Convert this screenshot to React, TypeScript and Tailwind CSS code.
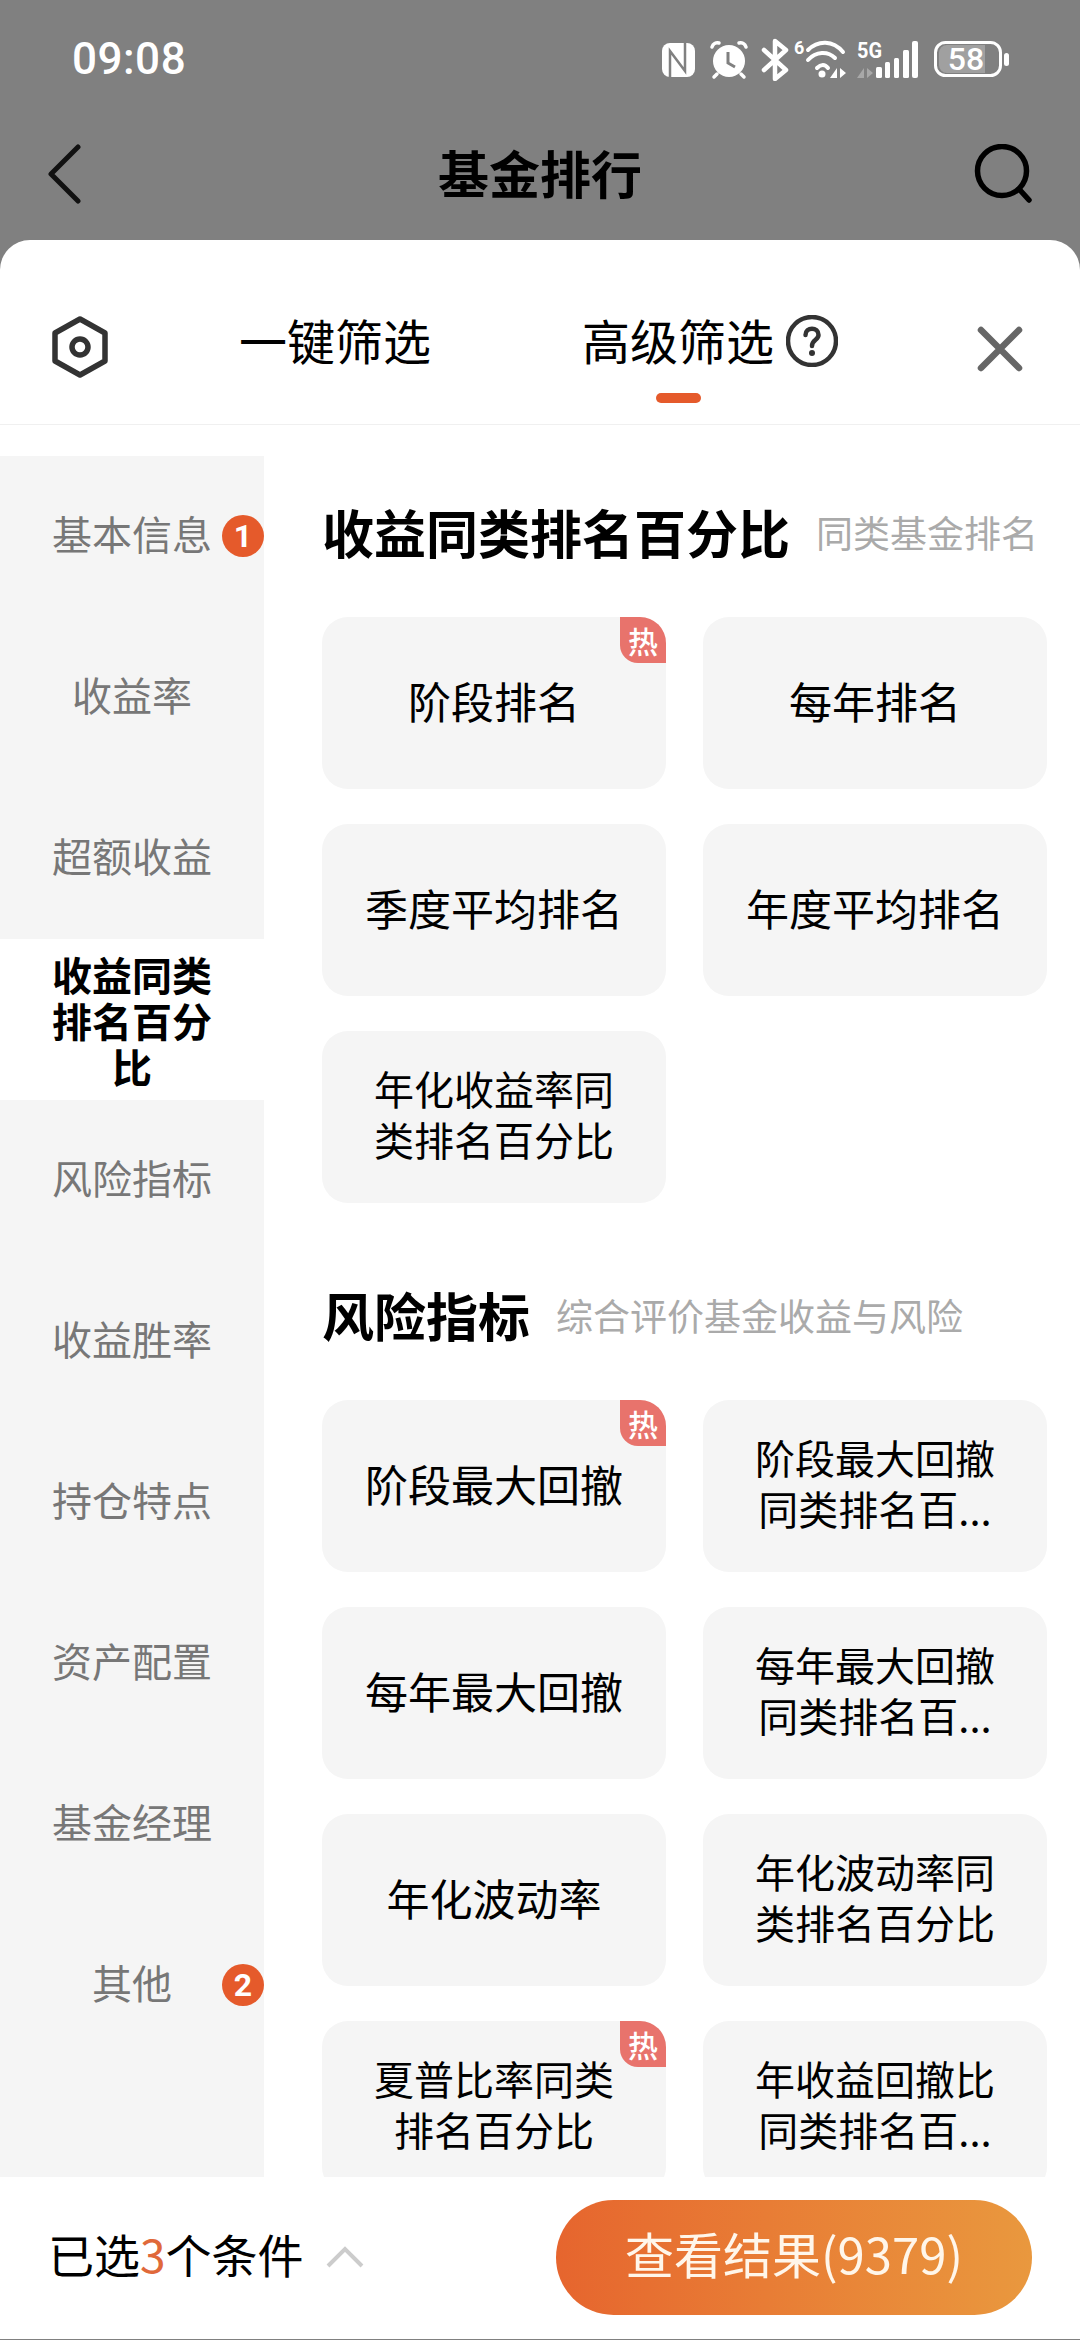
const CJK = "font-['Noto_Sans_CJK_SC','Noto_Sans',sans-serif]";

type SideItem = { label: string; badge?: number; active?: boolean };

const SIDE_ITEMS: SideItem[] = [
  { label: "基本信息", badge: 1 },
  { label: "收益率" },
  { label: "超额收益" },
  { label: "收益同类排名百分比", active: true },
  { label: "风险指标" },
  { label: "收益胜率" },
  { label: "持仓特点" },
  { label: "资产配置" },
  { label: "基金经理" },
  { label: "其他", badge: 2 },
];

type Option = { lines: string[]; hot?: boolean };

const RANK_OPTIONS: Option[] = [
  { lines: ["阶段排名"], hot: true },
  { lines: ["每年排名"] },
  { lines: ["季度平均排名"] },
  { lines: ["年度平均排名"] },
  { lines: ["年化收益率同", "类排名百分比"] },
];

const RISK_OPTIONS: Option[] = [
  { lines: ["阶段最大回撤"], hot: true },
  { lines: ["阶段最大回撤", "同类排名百..."] },
  { lines: ["每年最大回撤"] },
  { lines: ["每年最大回撤", "同类排名百..."] },
  { lines: ["年化波动率"] },
  { lines: ["年化波动率同", "类排名百分比"] },
  { lines: ["夏普比率同类", "排名百分比"], hot: true },
  { lines: ["年收益回撤比", "同类排名百..."] },
];

function StatusIcons() {
  return (
    <svg width="352" height="44" viewBox="0 0 352 44" fill="none" className="block">
      {/* nfc */}
      <rect x="5" y="6" width="33" height="34" rx="8" fill="#fff" />
      <path d="M13 40V14l15 20V6" stroke="#808080" strokeWidth="2.5" />
      {/* alarm */}
      <circle cx="72" cy="24" r="16" fill="#fff" />
      <path d="M62 6c-3-1-6 1-7 4M82 6c3-1 6 1 7 4M60 37l-3 3M84 37l3 3" stroke="#fff" strokeWidth="3.5" strokeLinecap="round" />
      <path d="M71 15v11l7 4" stroke="#808080" strokeWidth="3" />
      {/* bluetooth */}
      <path d="M107 13l22 20-11 9V4l11 9-22 20" stroke="#fff" strokeWidth="4.5" strokeLinejoin="round" strokeLinecap="round" />
      {/* wifi */}
      <text x="137" y="17" fill="#fff" fontFamily="Roboto, sans-serif" fontSize="18" fontWeight="700">6</text>
      <path d="M151 13c10-10 25-10 35 2M151 23c8-9 20-9 27-2M160 31c4-4 8-4 11 0" stroke="#fff" strokeWidth="4" strokeLinecap="round" />
      <circle cx="165" cy="37" r="3.5" fill="#fff" />
      <path d="M180 31v10h-7zM183 31v10l6-5z" fill="#fff" />
      {/* 5g + signal */}
      <text x="200" y="21" fill="#fff" fontFamily="Roboto, sans-serif" fontSize="22" fontWeight="700" textLength="25" lengthAdjust="spacingAndGlyphs">5G</text>
      <path d="M207 31v10h-7zM210 31v10l6-5z" fill="#a8a8a8" />
      <rect x="219" y="30" width="6" height="11" rx="1.5" fill="#fff" />
      <rect x="228" y="25" width="5" height="16" rx="1.5" fill="#fff" />
      <rect x="237" y="21" width="5" height="20" rx="1.5" fill="#fff" />
      <rect x="246" y="13" width="6" height="28" rx="1.5" fill="#fff" />
      <rect x="255" y="4" width="6" height="37" rx="2" fill="#fff" />
      {/* battery */}
      <path d="M290 8h38v28h-38a8 8 0 0 1-8-8V16a8 8 0 0 1 8-8z" fill="#a0a0a0" />
      <rect x="278.5" y="5.5" width="65" height="33" rx="10" stroke="#fff" strokeWidth="3" />
      <rect x="347" y="16" width="5" height="13" rx="2.5" fill="#fff" />
      <text x="309" y="33" textAnchor="middle" fill="#fff" fontFamily="Roboto, sans-serif" fontSize="32" fontWeight="500">58</text>
    </svg>
  );
}

function OptionCard({ option }: { option: Option }) {
  const twoLines = option.lines.length > 1;

  return (
    <div className="relative flex h-[172px] flex-col items-center justify-center rounded-[26px] bg-[#f5f5f5] pb-[6px] text-black">
      {option.lines.map((line) => (
        <div
          key={line}
          className={twoLines ? "text-[40px] leading-[51px]" : "text-[43px] leading-[56px]"}
        >
          {line}
        </div>
      ))}

      {option.hot && (
        <div className="absolute right-0 top-0 flex h-[46px] w-[46px] items-center justify-center rounded-tr-[26px] rounded-bl-[18px] bg-[#e8736c] text-[30px] font-medium leading-none text-white">
          热
        </div>
      )}
    </div>
  );
}

function Section({
  title,
  hint,
  options,
  className,
}: {
  title: string;
  hint: string;
  options: Option[];
  className?: string;
}) {
  return (
    <div className={className}>
      <div className="flex h-[72px] items-center pb-[4px]">
        <div className="text-[52px] font-bold leading-[66px] text-black">{title}</div>
        <div className="ml-[26px] text-[37px] leading-[66px] text-[#aaaaaa]">{hint}</div>
      </div>

      <div className="mt-[47px] grid w-[725px] grid-cols-2 gap-x-[37px] gap-y-[35px]">
        {options.map((option) => (
          <OptionCard key={option.lines.join("")} option={option} />
        ))}
      </div>
    </div>
  );
}

export default function App() {
  return (
    <div className={`flex h-[2340px] w-[1080px] flex-col overflow-hidden bg-[#808080] ${CJK}`}>
      {/* status bar */}
      <div className="flex h-[118px] shrink-0 items-center justify-between pl-[72px] pr-[71px]">
        <div className="font-['Roboto',sans-serif] text-[44px] font-medium tracking-[0.5px] text-white">09:08</div>
        <StatusIcons />
      </div>

      {/* title bar */}
      <div className="flex h-[122px] shrink-0 items-start justify-between pl-[48px] pr-[48px] pt-[26px]">
        <div className="w-[58px]">
          <svg width="36" height="60" viewBox="0 0 36 60" fill="none" className="-ml-[2px]">
            <path d="M32 3 5 30l27 27" stroke="#111" strokeWidth="5" strokeLinecap="round" strokeLinejoin="round" />
          </svg>
        </div>
        <div className="text-[51px] font-bold leading-[56px] text-black">基金排行</div>
        <svg width="58" height="60" viewBox="0 0 58 60" fill="none">
          <circle cx="28" cy="27" r="24.5" stroke="#000" strokeWidth="5.5" />
          <path d="M45 45l10 11" stroke="#000" strokeWidth="5.5" strokeLinecap="round" />
        </svg>
      </div>

      {/* sheet */}
      <div className="mb-px flex min-h-0 flex-1 flex-col rounded-t-[30px] bg-white">
        <div className="flex h-[185px] shrink-0 items-start border-b border-[#f0f0f0] pl-[52px] pt-[71px]">
          <svg width="56" height="62" viewBox="0 0 56 62" fill="none" className="mt-[5px]">
            <path d="M28 3 53 17v28L28 59 3 45V17z" stroke="#333" strokeWidth="5.5" strokeLinejoin="round" />
            <circle cx="28" cy="31" r="8" stroke="#333" strokeWidth="5.5" />
          </svg>

          <div className="ml-[131px] text-[48px] leading-[56px] text-black">一键筛选</div>

          <div className="ml-[151px] flex flex-col items-center">
            <div className="text-[48px] leading-[56px] text-black">高级筛选</div>
            <div className="mt-[26px] h-[10px] w-[45px] rounded-full bg-[#e55a2b]" />
          </div>

          <svg width="52" height="52" viewBox="0 0 52 52" fill="none" className="ml-[12px] mt-[4px]">
            <circle cx="26" cy="26" r="24" stroke="#333" strokeWidth="4.5" />
            <path d="M19.5 20c0-8.5 13-8.5 13 0 0 5-6.5 4.5-6.5 11" stroke="#333" strokeWidth="4.5" strokeLinecap="round" />
            <circle cx="26" cy="38" r="3" fill="#333" />
          </svg>

          <svg width="48" height="48" viewBox="0 0 48 48" fill="none" className="ml-[138px] mt-[14px]">
            <path d="M5 5l38 38M43 5 5 43" stroke="#666" strokeWidth="6.5" strokeLinecap="round" />
          </svg>
        </div>

        <div className="flex min-h-0 flex-1">
          {/* left rail */}
          <div className="mt-[31px] w-[264px] shrink-0 bg-[#f5f5f5]">
            {SIDE_ITEMS.map((item) => (
              <div
                key={item.label}
                className={
                  item.active
                    ? "flex h-[161px] items-center justify-center bg-white px-[50px] text-center text-[40px] font-bold leading-[46px] text-black"
                    : "relative flex h-[161px] items-center justify-center pb-[7px] text-[40px] text-[#777777]"
                }
              >
                {item.label}
                {item.badge && (
                  <span className="absolute right-0 top-[59px] flex h-[42px] w-[42px] items-center justify-center rounded-full bg-[#e55a2b] font-['Roboto',sans-serif] text-[32px] font-bold text-white">
                    {item.badge}
                  </span>
                )}
              </div>
            ))}
          </div>

          {/* filter options */}
          <div className="min-w-0 flex-1 overflow-hidden pl-[58px] pt-[73px]">
            <Section title="收益同类排名百分比" hint="同类基金排名" options={RANK_OPTIONS} />
            <Section
              title="风险指标"
              hint="综合评价基金收益与风险"
              options={RISK_OPTIONS}
              className="mt-[78px]"
            />
          </div>
        </div>

        {/* footer */}
        <div className="flex h-[162px] shrink-0 items-start bg-white pl-[48px] pt-[23px]">
          <div className="flex h-[115px] items-center pb-[9px] text-[46px] text-black">
            已选<span className="text-[#e0693a]">3</span>个条件
            <svg width="38" height="22" viewBox="0 0 38 22" fill="none" className="ml-[22px] mt-[7px]">
              <path d="M2 20 19 3l17 17" stroke="#cccccc" strokeWidth="4" />
            </svg>
          </div>

          <div className="ml-auto mr-[48px] flex h-[115px] w-[476px] items-center justify-center rounded-full bg-gradient-to-r from-[#e6652e] to-[#e9983e] pb-[9px] text-[49px] text-[#fff6ea]">
            查看结果(9379)
          </div>
        </div>
      </div>
    </div>
  );
}
